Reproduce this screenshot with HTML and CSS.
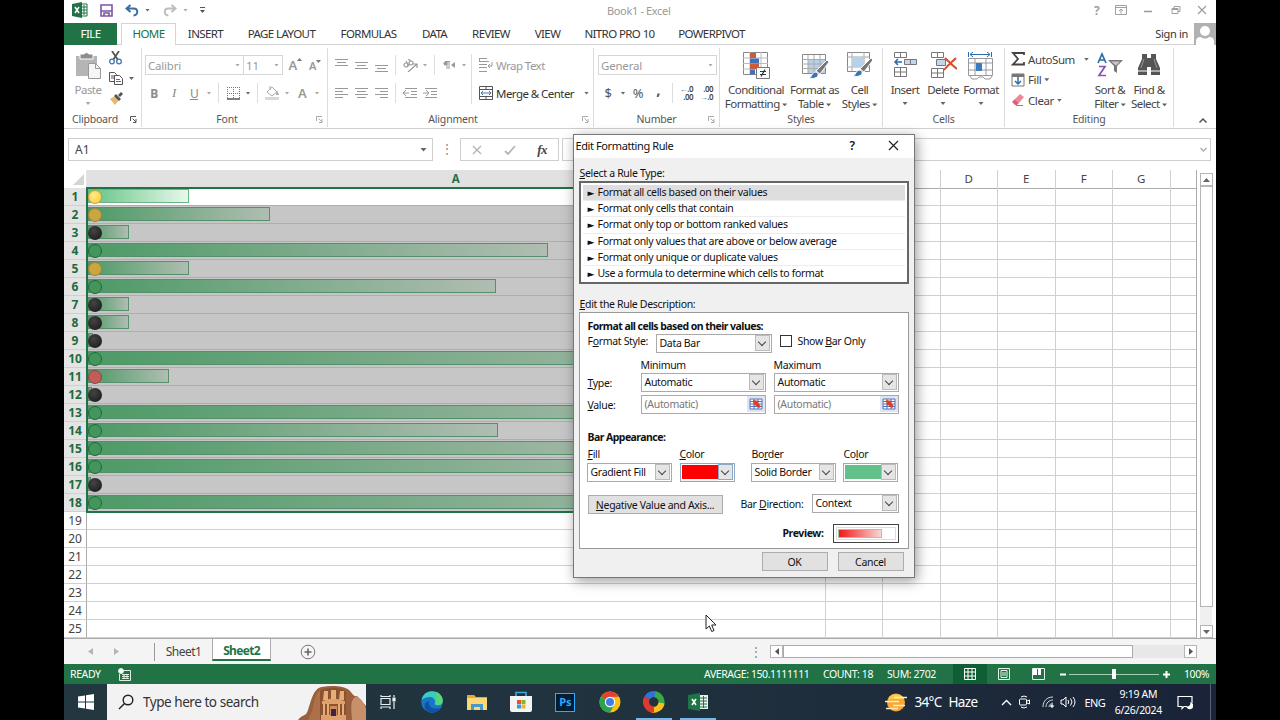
FILE: index.html
```html
<!DOCTYPE html>
<html lang="en">
<head>
  <meta charset="UTF-8" />
  <meta name="viewport" content="width=device-width, initial-scale=1.0" />
  <title>Book1 - Excel</title>
  <link rel="stylesheet" href="styles.css">
</head>
<body>
  <div class="screen">

    <!-- Title bar -->
    <div class="titlebar">
      <div class="quick">
        <svg width="16" height="16" viewBox="0 0 16 16"><path d="M8 2h7v12H8z" fill="#fff" stroke="#217346"/><path d="M9 5h6M9 8h6M9 11h6M12 3v10" stroke="#217346"/><path d="M0 2l10-2v16L0 14z" fill="#217346"/><path d="M3 5l4 6M7 5l-4 6" stroke="#fff" stroke-width="1.5"/></svg>
        <svg width="13" height="13" viewBox="0 0 13 13"><path d="M1 1h11v11H1z" fill="#fff" stroke="#7b56a8" stroke-width="1.6"/><path d="M1 7h11M4 12V9h5v3" fill="none" stroke="#7b56a8" stroke-width="1.6"/></svg>
        <svg width="14" height="13" viewBox="0 0 14 13"><path d="M5.500 1L1.500 4.500l4 3.500M2 4.500h6.500c5 0 5 6.500 0 7" fill="none" stroke="#3c6ea5" stroke-width="2"/></svg>
        <i class="caret"></i>
        <svg class="redo" width="14" height="13" viewBox="0 0 14 13"><path d="M8.500 1l4 3.500-4 3.500M12 4.500H5.500c-5 0-5 6.500 0 7" fill="none" stroke="#bdbdbd" stroke-width="2"/></svg>
        <i class="caret pale"></i>
        <svg class="more" width="5" height="6" viewBox="0 0 5 6"><path d="M0 .5h5" stroke="#555"/><path d="M0 3h5L2.500 6z" fill="#555"/></svg>
      </div>
      <div class="book">Book1 - Excel</div>
      <div class="winbtns">
        <b>?</b>
        <svg width="12" height="10" viewBox="0 0 12 10" fill="none" stroke="#a0a0a0"><path d="M.5.5h11v9H.5zM.5 2.500h11M6 8.500V4.500M4 6l2-2 2 2"/></svg>
        <svg width="12" height="10" viewBox="0 0 12 10"><path d="M2 6.500h8" stroke="#999" stroke-width="1.500"/></svg>
        <svg width="12" height="10" viewBox="0 0 12 10" fill="none" stroke="#a0a0a0"><path d="M2 3.500h6v5H2zM4 3.500v-2h6v5H8M2 4.500h6"/></svg>
        <svg width="10" height="10" viewBox="0 0 10 10"><path d="M1 1l8 8M9 1L1 9" stroke="#a0a0a0" stroke-width="1.300"/></svg>
      </div>
    </div>

    <!-- Ribbon tabs -->
    <div class="tabs">
      <div class="tab file">FILE</div>
      <div class="tab home">HOME</div>
      <div class="tab">INSERT</div>
      <div class="tab">PAGE LAYOUT</div>
      <div class="tab">FORMULAS</div>
      <div class="tab">DATA</div>
      <div class="tab">REVIEW</div>
      <div class="tab">VIEW</div>
      <div class="tab">NITRO PRO 10</div>
      <div class="tab">POWERPIVOT</div>
      <div class="signin">Sign in</div>
      <svg width="22" height="22" viewBox="0 0 22 22"><path d="M0 0h22v22H0z" fill="#b1b1b1"/><circle cx="11" cy="8" r="5" fill="#fff"/><path d="M2 22v-3c0-4 2-5 5-5 2 2 6 2 8 0 3 0 5 1 5 5v3z" fill="#fff"/></svg>
    </div>

    <!-- Ribbon -->
    <div class="ribbon">
      <div class="group clipboard">
        <div class="content">
          <div class="big off paste">
            <svg width="26" height="28" viewBox="0 0 26 28"><path d="M1 4h21v20H1z" fill="#b5b5b5"/><path d="M5 2h4a3 3 0 0 1 5 0h4v5H5z" fill="#8d8d8d" stroke="#fff"/><path d="M13.500 11.500h7l5 5v10h-12z" fill="#f6f6f6" stroke="#999"/><path d="M20.500 11.500v5h5" fill="none" stroke="#999"/></svg>
            <span>Paste</span><i class="caret pale"></i>
          </div>
          <div class="minis">
            <svg width="13" height="14" viewBox="0 0 13 14"><path d="M3 0l6 9M10 0L4 9" stroke="#555" stroke-width="1.800"/><circle cx="3" cy="10.500" r="2.300" fill="none" stroke="#3c78b4" stroke-width="1.300"/><circle cx="10" cy="10.500" r="2.300" fill="none" stroke="#3c78b4" stroke-width="1.300"/></svg>
            <div><svg width="14" height="13" viewBox="0 0 14 13" fill="#fff" stroke="#555"><path d="M.5.5h5l2 2v7h-7zM2 4h4M2 6h4"/><path d="M5.500 3.500h5l3 3v6h-8z"/><path d="M7 7.500h4M7 9.500h5" stroke="#3c78b4"/></svg><i class="caret"></i></div>
            <svg width="14" height="13" viewBox="0 0 14 13"><path d="M1 7l5-3 4 4-4 5z" fill="#e5b96c"/><path d="M5 4l2-2 5 5-2 2zM9 3l3-3 2 2-3 3z" fill="#555"/></svg>
          </div>
        </div>
        <div class="label"><span>Clipboard</span><svg class="launch dark" width="7" height="7" viewBox="0 0 7 7"><path d="M.5 5V.5H6M2.500 2.500L6 6M6 3v3.500H3"/></svg></div>
      </div>

      <div class="group font">
        <div class="content col">
          <div class="line">
            <div class="combo w99"><span>Calibri</span><i class="caret pale"></i></div>
            <div class="combo w39"><span>11</span><i class="caret pale"></i></div>
            <div class="w20 glyph grow">A<svg width="5" height="3"><path d="M0 3h5L2.500 0z" fill="#777"/></svg></div>
            <div class="w20 glyph small">A<svg width="5" height="3"><path d="M0 0h5L2.500 3z" fill="#777"/></svg></div>
          </div>
          <div class="line second">
            <div class="w20 fmt"><b>B</b></div>
            <div class="w20 fmt ital">I</div>
            <div class="w20 fmt under">U</div>
            <div class="w10"><i class="caret pale"></i></div>
            <div class="vsep"></div>
            <div class="w20"><svg width="13" height="13" viewBox="0 0 13 13" fill="none"><path d="M.5 0v12M6.500 0v12M12.500 0v12M0 .5h13M0 6.500h13" stroke="#777" stroke-dasharray="1 1"/><path d="M0 12h13" stroke="#555" stroke-width="1.500"/></svg></div>
            <div class="w10"><i class="caret"></i></div>
            <div class="vsep"></div>
            <div class="w20"><svg width="15" height="14" viewBox="0 0 15 14"><path d="M2 6l5-5 5 5-5 4zM5 4V0" fill="#fff" stroke="#aaa"/><path d="M12 4l2 5h-3z" fill="#aaa"/><path d="M0 11h14v3H0z" fill="#d9d9d9"/></svg></div>
            <div class="w10"><i class="caret pale"></i></div>
            <div class="w20 glyph">A</div>
            <div class="w10"><i class="caret pale"></i></div>
          </div>
        </div>
        <div class="label"><span>Font</span><svg class="launch" width="7" height="7" viewBox="0 0 7 7"><path d="M.5 5V.5H6M2.500 2.500L6 6M6 3v3.500H3"/></svg></div>
      </div>

      <div class="group align">
        <div class="content">
          <div class="col acol">
            <div class="line">
              <div class="w20"><svg class="bars" width="13" height="14"><path d="M0 1.500h13M2 4.500h9M0 7.500h13"/></svg></div>
              <div class="w20"><svg class="bars" width="13" height="14"><path d="M0 4.500h13M2 7.500h9M0 10.500h13"/></svg></div>
              <div class="w20"><svg class="bars" width="13" height="14"><path d="M0 7.500h13M2 10.500h9M0 13.500h13"/></svg></div>
              <div class="vsep"></div>
              <div class="w20"><svg width="15" height="13" viewBox="0 0 15 13" fill="none" stroke="#999" stroke-width="1.200"><circle cx="3" cy="6" r="2"/><path d="M3 2l3 5"/><circle cx="8" cy="4" r="2"/><path d="M5 0l3 2M5 13l9-8M10 5h4v4"/></svg></div>
              <div class="w10"><i class="caret pale"></i></div>
              <div class="vsep"></div>
              <div class="w20"><svg width="12" height="9" viewBox="0 0 12 9"><path d="M4 0v8M6 0v8M2 .5h5" stroke="#999"/><circle cx="2.500" cy="2.500" r="2" fill="#999"/><path d="M12 1v6L8 4z" fill="#999"/></svg></div>
              <div class="w10"><i class="caret pale"></i></div>
            </div>
            <div class="line second">
              <div class="w20"><svg class="bars" width="13" height="12"><path d="M0 1.500h13M0 4.500h8M0 7.500h13M0 10.500h8"/></svg></div>
              <div class="w20"><svg class="bars" width="13" height="12"><path d="M0 1.500h13M2 4.500h9M0 7.500h13M2 10.500h9"/></svg></div>
              <div class="w20"><svg class="bars" width="13" height="12"><path d="M0 1.500h13M5 4.500h8M0 7.500h13M5 10.500h8"/></svg></div>
              <div class="vsep"></div>
              <div class="w20"><svg class="bars" width="14" height="12"><path d="M2 1.500h12M8 4.500h6M8 7.500h6M2 10.500h12M0 6h6M3 3L0 6l3 3"/></svg></div>
              <div class="w20"><svg class="bars" width="14" height="12"><path d="M2 1.500h12M8 4.500h6M8 7.500h6M2 10.500h12M0 6h6M3 3l3 3-3 3"/></svg></div>
            </div>
          </div>
          <div class="vsep tall"></div>
          <div class="col wrapcol">
            <div class="line wrap"><svg width="14" height="14" viewBox="0 0 14 14" fill="none" stroke="#999"><path d="M0 .5h8M0 3.500h10M0 6.500h8M0 9.500h8M0 13.500h8M.5 0v4M13 4v4H9M11 6L9 8l2 2"/></svg>Wrap Text</div>
            <div class="line second merge"><svg width="14" height="14" viewBox="0 0 14 14" fill="none" stroke="#555"><path d="M.5.5h13v13H.5zM.5 3.500h13M.5 10.500h13M7 0v3M7 11v3"/><path d="M2 7h10M4 5L2 7l2 2M10 5l2 2-2 2" stroke="#3c78b4"/></svg>Merge &amp; Center<i class="caret"></i></div>
          </div>
        </div>
        <div class="label"><span>Alignment</span><svg class="launch" width="7" height="7" viewBox="0 0 7 7"><path d="M.5 5V.5H6M2.500 2.500L6 6M6 3v3.500H3"/></svg></div>
      </div>

      <div class="group number">
        <div class="content col">
          <div class="line"><div class="combo w118"><span>General</span><i class="caret pale"></i></div></div>
          <div class="line second">
            <div class="w20 sym">$</div>
            <div class="w10"><i class="caret"></i></div>
            <div class="w20 sym">%</div>
            <div class="w20 sym comma"><b>,</b></div>
            <div class="vsep"></div>
            <div class="dec"><span><em>←</em>.0</span><span>.00</span></div>
            <div class="dec"><span>.00</span><span><em>→</em>.0</span></div>
          </div>
        </div>
        <div class="label"><span>Number</span><svg class="launch" width="7" height="7" viewBox="0 0 7 7"><path d="M.5 5V.5H6M2.500 2.500L6 6M6 3v3.500H3"/></svg></div>
      </div>

      <div class="group styles">
        <div class="content">
          <div class="big cond">
            <svg width="28" height="28" viewBox="0 0 28 28"><path d="M1.500.5h24v22h-24z" fill="#fff" stroke="#888"/><path d="M1 6h25M1 11.500h25M1 17h25M8 0v22M19 0v22" stroke="#bbb"/><path d="M8 1h6v5H8zM8 12h9v5H8z" fill="#cf5a38"/><path d="M8 6.500h9v5H8zM8 17.500h5v5H8z" fill="#3f73b5"/><path d="M14.500 15.500h13v11h-13z" fill="#fff" stroke="#777"/><path d="M18 19.500h6M18 22.500h6M23 17.500l-4 7" stroke="#333" stroke-width="1.200"/></svg>
            <span>Conditional</span><span>Formatting <i class="caret"></i></span>
          </div>
          <div class="big fat">
            <svg width="28" height="28" viewBox="0 0 28 28"><path d="M1.500 2.500h23v19h-23z" fill="#fff" stroke="#888"/><path d="M7 8h17v13H7z" fill="#b7d1e8"/><path d="M1 7.500h23M1 12h23M1 16.500h23M7 3v18M13 3v18M19 3v18" stroke="#aaa"/><path d="M26 8l2 2-9 12-4-3z" fill="#777" stroke="#fff"/><path d="M8 26c3-1 3-6 7-6 3 1 3 5-1 6-2 1-4 0-6 0z" fill="#3676b5" stroke="#fff"/></svg>
            <span>Format as</span><span>Table <i class="caret"></i></span>
          </div>
          <div class="big cst">
            <svg width="28" height="28" viewBox="0 0 28 28"><path d="M1.500.5h22v19h-22z" fill="#fff" stroke="#888"/><path d="M1 5h22M1 15h22M6 0v19M18 0v19" stroke="#aaa"/><path d="M6 5h12v10H6z" fill="#b7d1e8"/><path d="M25 6l2 2-9 12-4-3z" fill="#777" stroke="#fff"/><path d="M7 24c3-1 3-6 7-6 3 1 3 5-1 6-2 1-4 0-6 0z" fill="#3676b5" stroke="#fff"/></svg>
            <span>Cell</span><span>Styles <i class="caret"></i></span>
          </div>
        </div>
        <div class="label"><span>Styles</span></div>
      </div>

      <div class="group cells">
        <div class="content">
          <div class="big w38">
            <svg width="24" height="28" viewBox="0 0 24 28" fill="#fff" stroke="#777"><path d="M1.500.5h12v5h-12zM7.500.5v5M1.500 15.500h12v9h-12zM7.500 15.500v9M1.500 20h12"/><path d="M11.500 7.500h12v5h-12zM17.500 7.500v5" fill="#c4d7ea"/><path d="M2 10h7M5 7l-3 3 3 3" fill="none" stroke="#2b6cae" stroke-width="1.500"/></svg>
            <span>Insert</span><i class="caret"></i>
          </div>
          <div class="big w38">
            <svg width="27" height="28" viewBox="0 0 27 28" fill="#fff" stroke="#777"><path d="M1.500.5h12v5h-12zM7.500.5v5M1.500 16.500h12v9h-12zM7.500 16.500v9M1.500 21h12"/><path d="M6.500 7.500h9v6h-9z" fill="#c4d7ea"/><path d="M15 6c3 3 7 7 12 11M26 6c-4 4-8 7-12 12" fill="none" stroke="#d2502c" stroke-width="2"/></svg>
            <span>Delete</span><i class="caret"></i>
          </div>
          <div class="big w38">
            <svg width="26" height="28" viewBox="0 0 26 28" fill="#fff" stroke="#999"><path d="M.5 6.500h24v17h-24z"/><path d="M.5 11h24M.5 18h24M7 6v18M18 6v18M2 24l2 3h5l2-2h4l2 2h5l2-3"/><path d="M8 11h6v8H8z" fill="#3b7cc0" stroke="none"/><path d="M2 2.500h20M5 0L2 2.500 5 5M19 0l3 2.500L19 5M.5 0v5M23.500 0v5" fill="none" stroke="#2b6cae"/></svg>
            <span>Format</span><i class="caret"></i>
          </div>
        </div>
        <div class="label"><span>Cells</span></div>
      </div>

      <div class="group editing">
        <div class="content">
          <div class="edits">
            <div class="edit"><svg width="14" height="14" viewBox="0 0 14 14"><path d="M13 3V1H2l5 6-5 5.500h11V10" fill="none" stroke="#444" stroke-width="1.800"/></svg>AutoSum<i class="caret far"></i></div>
            <div class="edit"><svg width="14" height="14" viewBox="0 0 14 14"><path d="M1 1h12v12H1z" fill="#fff" stroke="#777"/><path d="M1 1h12v3H1z" fill="#777"/><path d="M7 4v7M4 8l3 3 3-3" fill="none" stroke="#2b6cae" stroke-width="1.500"/></svg>Fill<i class="caret"></i></div>
            <div class="edit"><svg width="14" height="14" viewBox="0 0 14 14"><path d="M4 6l5-5 4 3-5 6z" fill="#e68a9c"/><path d="M1 9l3-3 4 4-2 2H4z" fill="#e0607c"/><path d="M5 12.500h7" stroke="#888"/></svg>Clear<i class="caret"></i></div>
          </div>
          <div class="big w38">
            <svg width="28" height="28" viewBox="0 0 28 28"><path d="M2 11l4-9 4 9M3.500 8h5" fill="none" stroke="#2b6cae" stroke-width="1.700"/><path d="M3 14.500h6L3 23.500h7" fill="none" stroke="#8454b0" stroke-width="1.700"/><path d="M12 8h15l-6 6v7l-3-2v-5z" fill="#777"/><path d="M15 9.500h9l-4 4z" fill="#c9c9c9"/></svg>
            <span>Sort &amp;</span><span>Filter <i class="caret"></i></span>
          </div>
          <div class="big w40">
            <svg width="24" height="28" viewBox="0 0 24 28" fill="#555"><path d="M5 2h5v4h4V2h5v5l4 9v7h-9v-8h-4v8H1v-7l4-9z"/><path d="M1 19h9M14 19h9" stroke="#fff"/><path d="M7 7l-3 9M17 7l3 9" stroke="#999"/></svg>
            <span>Find &amp;</span><span>Select <i class="caret"></i></span>
          </div>
        </div>
        <div class="label"><span>Editing</span></div>
      </div>
      <svg class="collapse" width="8" height="5" viewBox="0 0 8 5"><path d="M.5 4.500L4 1l3.500 3.500" fill="none" stroke="#555" stroke-width="1.500"/></svg>
    </div>

    <!-- Formula bar -->
    <div class="formulabar">
      <div class="namebox">A1<i class="caret wide"></i></div>
      <div class="dots">⋮</div>
      <div class="fxbox">
        <svg width="10" height="10" viewBox="0 0 10 10"><path d="M1 1l8 8M9 1L1 9" stroke="#b5b5b5" stroke-width="1.400"/></svg>
        <svg width="12" height="10" viewBox="0 0 12 10"><path d="M1 6l3 3 7-8" fill="none" stroke="#b5b5b5" stroke-width="1.800"/></svg>
        <em>fx</em>
      </div>
      <div class="formula"><svg width="7" height="5" viewBox="0 0 7 5"><path d="M.5 1l3 3 3-3" fill="none" stroke="#aaa" stroke-width="1.300"/></svg></div>
    </div>

    <!-- Worksheet -->
    <div class="sheetarea">
      <div class="sheet" id="sheet">
        <div class="row colhead">
          <div class="corner"><svg width="11" height="11"><path d="M11 0v11H0z" fill="#d5d5d5"/></svg></div>
          <div class="active">A</div><div>B</div><div>C</div><div>D</div><div>E</div><div>F</div><div>G</div><div></div>
        </div>
        <div class="selection"></div>
      </div>
      <div class="vscroll">
        <div class="sbtn"><svg width="7" height="4"><path d="M0 4h7L3.500 0z" fill="#666"/></svg></div>
        <div class="vthumb"></div>
        <div class="sbtn"><svg width="7" height="4"><path d="M0 0h7L3.500 4z" fill="#666"/></svg></div>
      </div>
    </div>

    <!-- Sheet tabs -->
    <div class="sheettabs">
      <div class="nav"><svg width="5" height="7"><path d="M5 0v7L0 3.500z" fill="#b5b5b5"/></svg><svg width="5" height="7"><path d="M0 0v7l5-3.500z" fill="#b5b5b5"/></svg></div>
      <div class="stab">Sheet1</div>
      <div class="stab on">Sheet2</div>
      <svg class="plus" width="16" height="16" viewBox="0 0 16 16"><circle cx="8" cy="8" r="6.800" fill="none" stroke="#777"/><path d="M4.500 8h7M8 4.500v7" stroke="#666" stroke-width="1.600"/></svg>
      <div class="dots hd">⋮</div>
      <div class="hscroll">
        <div class="sbtn"><svg width="4" height="7"><path d="M4 0v7L0 3.500z" fill="#555"/></svg></div>
        <div class="hthumb"></div>
        <div class="sbtn"><svg width="4" height="7"><path d="M0 0v7l4-3.500z" fill="#555"/></svg></div>
      </div>
    </div>

    <!-- Status bar -->
    <div class="status">
      <span class="ready">READY</span>
      <svg width="13" height="13" viewBox="0 0 13 13" fill="none" stroke="#dcefe3"><path d="M5 2.500h7.500v10H1.500V6M4 6.500h7M4 8.500h7M4 10.500h7M6 6v5M9 6v5"/><circle cx="3" cy="3" r="2.500" fill="#fff"/></svg>
      <div class="stats"><span class="avg">AVERAGE: 150.1111111</span><span class="cnt">COUNT: 18</span><span class="sum">SUM: 2702</span></div>
      <div class="view on"><svg width="12" height="12" fill="none" stroke="#fff"><path d="M.5.5h11v11H.5zM.5 4h11M.5 8h11M4 0v12M8 0v12"/></svg></div>
      <div class="view"><svg width="12" height="12" fill="none" stroke="#e4f2e9"><path d="M.5.5h11v11H.5zM3 2.500h6v7H3zM4 5h4M4 7h4"/></svg></div>
      <div class="view"><svg width="13" height="12"><path d="M.5.5h12v11H.5z" fill="none" stroke="#e4f2e9"/><path d="M1 1h4v6H1zM6 1h3v6H6z" fill="#fff"/></svg></div>
      <svg class="zoom" width="110" height="12" viewBox="0 0 110 12"><path d="M0 6.500h6M103 6.500h7M106.500 3v7" stroke="#fff" stroke-width="2"/><path d="M9 6.500h90" stroke="#a7cdb5"/><path d="M52 1h4v10h-4z" fill="#fff"/></svg>
      <span class="pct">100%</span>
    </div>

    <!-- Taskbar -->
    <div class="taskbar">
      <div class="start"><svg width="16" height="16" viewBox="0 0 16 16" fill="#fff"><path d="M0 2.500L7 1.500v6H0zM8 1.300L16 0v7.500H8zM0 8.500h7v6l-7-1zM8 8.500h8V16l-8-1.300z"/></svg></div>
      <div class="search">
        <svg width="16" height="16" viewBox="0 0 16 16" fill="none" stroke="#222" stroke-width="1.400"><circle cx="10" cy="6" r="4.800"/><path d="M6.500 9.500L1 15"/></svg>
        <span>Type here to search</span>
        <svg class="petra" width="68" height="34" viewBox="0 0 68 34"><path d="M0 34c4-6 8-3 10-10C13 16 15 2 24 1c10-2 22-1 27 3 4 4 5 7 8 6l9 10v14z" fill="#9a5f3d"/><path d="M12 30c4-6 3-20 10-26v30H10z" fill="#ad7049"/><path d="M22 34V5c6-5 22-4 26 1v28z" fill="#8a5230"/><path d="M54 34c0-8-3-18 3-23 6-1 10 8 11 12v11z" fill="#c88f6b"/><path d="M24 15l11-3 12 3v3H24zM23 29h25v5H23z" fill="#e0a06b"/><path d="M26 5h4v9h-5zM33 4h5v9h-5zM42 5h4v9h-5z" fill="#e6ad79"/><path d="M26 18v11M30 18v11M41 18v11M45 18v11" stroke="#e6ad79" stroke-width="2"/><path d="M32 20h7v10h-7z" fill="#d08c5a"/><path d="M33 23h5v7h-5z" fill="#42204d"/></svg>
      </div>
      <div class="app"><svg width="16" height="14" viewBox="0 0 16 14" fill="none" stroke="#e8eef0" stroke-width="1.200"><path d="M1 3.500h9v6H1zM1 0v1.500h9V0M1 14v-2h9v2M14 0v2M14 7v7"/><path d="M13 3h2v3h-2z" fill="#fff"/></svg></div>
      <div class="app"><svg width="22" height="22" viewBox="0 0 22 22"><circle cx="11" cy="11" r="10.700" fill="#1677c8"/><path d="M.5 9C2 3 6 .3 11 .3c6 0 11 4 10.700 9.700-.2 4-4 5-7 4-1.700-.6-1-2-.5-3C14 8 12 6 9 6 5 6 2 7.500.5 9z" fill="#3ccbc0"/><path d="M15 1c5 2 7 6 6.600 9.500-.5 3-3 4-6 3.500z" fill="#5bd675"/><path d="M8 10c-1 6 4 9 11 7-3 5-9 5.500-13 3-4-4-3-9 2-10z" fill="#1251a0"/></svg></div>
      <div class="app"><svg width="20" height="17" viewBox="0 0 20 17"><path d="M0 1h7l2 2h11v13H0z" fill="#e9a931"/><path d="M0 4h20v12H0z" fill="#fbd775"/><path d="M4 16v-6h12v6h-3v-3H7v3z" fill="#4a98c9"/></svg></div>
      <div class="app"><svg width="22" height="22" viewBox="0 0 22 22"><path d="M6 5V1.500h10V5" fill="none" stroke="#3da9e6" stroke-width="1.600"/><path d="M0 5h22v14q0 2-2 2H2q-2 0-2-2z" fill="#f4f4f4"/><path d="M7 9h4v4H7z" fill="#e8512c"/><path d="M11.500 9h4v4h-4z" fill="#7fb928"/><path d="M7 13.500h4v4H7z" fill="#2e9fe0"/><path d="M11.500 13.500h4v4h-4z" fill="#f6b51e"/></svg></div>
      <div class="app"><div class="ps">Ps</div></div>
      <div class="app"><svg width="22" height="22" viewBox="0 0 22 22"><circle cx="11" cy="11" r="10.500" fill="#fbc116"/><path d="M11 11L1.900 5.700A10.500 10.500 0 0 1 20 5.800L11 6z" fill="#e24234"/><path d="M1.900 5.700A10.500 10.500 0 0 0 11 21.500l4.500-8L11 11z" fill="#2fa24f"/><circle cx="11" cy="11" r="5.200" fill="#fff"/><circle cx="11" cy="11" r="4" fill="#3f7ee8"/></svg></div>
      <div class="app open"><svg width="22" height="22" viewBox="0 0 22 22" fill="none" stroke-width="6"><path d="M4 7a8 8 0 0 1 9-3.700" stroke="#3171d8"/><path d="M12 3.200A8 8 0 0 1 18 14" stroke="#3aa845"/><path d="M18.500 12A8 8 0 0 1 9 18.700" stroke="#f4c21a"/><path d="M11 18.800A8 8 0 0 1 4 7" stroke="#e03a2f"/></svg></div>
      <div class="app open"><svg width="20" height="18" viewBox="0 0 20 18"><path d="M11 2h9v14h-9z" fill="#e9f2ec"/><path d="M12 5h7M12 8h7M12 11h7M12 14h7M15.500 3v12" stroke="#217346"/><path d="M0 2l12-2v18L0 16z" fill="#1e7446"/><path d="M4 6l4 6M8 6l-4 6" stroke="#fff" stroke-width="1.600"/></svg></div>
      <div class="tray">
        <svg width="22" height="19" viewBox="0 0 22 19"><circle cx="11" cy="9.500" r="9" fill="#f6a833"/><path d="M3 6a9 9 0 0 1 16 0z" fill="#fbc84a"/><path d="M9 4.500h13M0 8.500h14M8 12.500h12M1 15.500h12" stroke="#ffe9c0" stroke-width="1.400"/></svg>
        <span class="temp">34°C</span><span class="haze">Haze</span>
        <svg class="chev" width="11" height="7" viewBox="0 0 11 7"><path d="M1 6l4.500-4.500L10 6" fill="none" stroke="#fff" stroke-width="1.300"/></svg>
        <svg class="cam" width="11" height="14" viewBox="0 0 11 14" fill="none" stroke="#fff"><rect x=".5" y="4" width="7" height="6" rx="1"/><path d="M8 6l2.500-1v4L8 8M2 2q3-2 6 0M2 12q3 2 6 0"/></svg>
        <svg class="wifi" width="12" height="12" viewBox="0 0 12 12" fill="none" stroke="#d5dae2"><path d="M1 11C1 5 5 1 11 1M4 11c0-4 3-7 7-7M7 11c0-2 2-4 4-4"/><circle cx="10" cy="10" r="1.300" fill="#fff"/></svg>
        <svg class="snd" width="16" height="12" viewBox="0 0 16 12" fill="none" stroke="#fff"><path d="M1 4h2l3-3v10L3 8H1zM8 4q1.500 2 0 4M10.500 2.500q3 3.500 0 7M13 1q4 5 0 10"/></svg>
        <span class="eng">ENG</span>
        <div class="clock"><span>9:19 AM</span><span>6/26/2024</span></div>
        <svg class="note" width="16" height="15" viewBox="0 0 16 15" fill="none" stroke="#fff" stroke-width="1.200"><path d="M10 11.500H7l-2 2v-2H1v-10h14V8"/><path d="M14 8a3 3 0 1 1-4 4q4 0 4-4z" fill="#fff"/></svg>
        <div class="desk"></div>
      </div>
    </div>

    <!-- Edit Formatting Rule dialog -->
    <div class="dialog">
      <div class="dtitle"><span>Edit Formatting Rule</span><b>?</b><svg width="11" height="11" viewBox="0 0 11 11"><path d="M1 1l9 9M10 1l-9 9" stroke="#222" stroke-width="1.200"/></svg></div>
      <div class="dlabel first"><u>S</u>elect a Rule Type:</div>
      <div class="rules">
        <div class="rule picked">Format all cells based on their values</div>
        <div class="rule">Format only cells that contain</div>
        <div class="rule">Format only top or bottom ranked values</div>
        <div class="rule">Format only values that are above or below average</div>
        <div class="rule">Format only unique or duplicate values</div>
        <div class="rule">Use a formula to determine which cells to format</div>
      </div>
      <div class="dlabel second"><u>E</u>dit the Rule Description:</div>
      <div class="panel">
        <div class="bold head">Format all cells based on their values:</div>
        <div class="frow style">
          <label>F<u>o</u>rmat Style:</label>
          <div class="select s116">Data Bar<i></i></div>
          <div class="check"></div>
          <span>Show <u>B</u>ar Only</span>
        </div>
        <div class="minmax">
          <span></span><span>Minimum</span><span>Maximum</span>
          <label><u>T</u>ype:</label><div class="select">Automatic<i></i></div><div class="select">Automatic<i></i></div>
          <label><u>V</u>alue:</label>
          <div class="select ref">(Automatic)<svg width="18" height="16" viewBox="0 0 18 16"><path d="M0 0h18v16H0z" fill="#dfe5f0"/><path d="M3 3h12v10H3z" fill="#fff" stroke="#5272b8"/><path d="M3 5.500h12M3 8h12M3 10.500h12M7 3v10M11 3v10" stroke="#5272b8"/><path d="M6 4l6 1-1 1.500 3 4-2 1.500-4-3-1 1z" fill="#d8402c"/></svg></div>
          <div class="select ref">(Automatic)<svg width="18" height="16" viewBox="0 0 18 16"><path d="M0 0h18v16H0z" fill="#dfe5f0"/><path d="M3 3h12v10H3z" fill="#fff" stroke="#5272b8"/><path d="M3 5.500h12M3 8h12M3 10.500h12M7 3v10M11 3v10" stroke="#5272b8"/><path d="M6 4l6 1-1 1.500 3 4-2 1.500-4-3-1 1z" fill="#d8402c"/></svg></div>
        </div>
        <div class="bold appear">Bar Appearance:</div>
        <div class="bars4">
          <span><u>F</u>ill</span><span><u>C</u>olor</span><span>Bo<u>r</u>der</span><span>Co<u>l</u>or</span>
          <div class="select s85">Gradient Fill<i></i></div>
          <div class="select s55 hot"><div class="swatch red"></div><i></i></div>
          <div class="select s85">Solid Border<i></i></div>
          <div class="select s55"><div class="swatch green"></div><i></i></div>
        </div>
        <div class="frow direction">
          <div class="btn neg"><span><u>N</u>egative Value and Axis...</span></div>
          <label>Bar <u>D</u>irection:</label>
          <div class="select s87">Context<i></i></div>
        </div>
        <div class="frow preview"><b>Preview:</b><div class="pbox"><div><div class="pfill"></div></div></div></div>
      </div>
      <div class="actions"><div class="btn">OK</div><div class="btn">Cancel</div></div>
    </div>

    <svg class="pointer" width="12" height="19" viewBox="0 0 12 19"><path d="M1 1v14l3.300-3 2.400 5.500 2.300-1L6.700 11H11z" fill="#fff" stroke="#222"/></svg>
  </div>

  <script>
    // [icon, bar width in px] for rows 1-18
    const cells = [
      ['yellow', 101], ['yellow', 182], ['black', 41], ['green', 460], ['yellow', 101], ['green', 408],
      ['black', 41], ['black', 41], ['black', 5], ['green', 690], ['red', 81], ['black', 4],
      ['green', 640], ['green', 410], ['green', 600], ['green', 640], ['black', 3], ['green', 690]
    ];

    let html = '';
    for (let n = 1; n <= 25; n++) {
      const cell = cells[n - 1];
      let inner = '';
      if (cell) {
        inner = `<div class="bar" style="width:${cell[1]}px"></div><div class="dot ${cell[0]}"></div>`;
      }
      html += `<div class="row ${cell ? 'sel' : ''} ${n === 1 ? 'current' : ''}"><div class="num">${n}</div><div class="cellA">${inner}</div>` + '<div></div>'.repeat(7) + '</div>';
    }
    document.getElementById('sheet').insertAdjacentHTML('beforeend', html);
  </script>
</body>
</html>
```
FILE: styles.css
```css
* {
  box-sizing: border-box;
}

body {
  margin: 0;
  background: #000;
  font-family: "Noto Sans", "Open Sans", sans-serif;
  font-size: 12px;
  color: #444;
  overflow: hidden;
}

svg {
  display: block;
  flex: none;
}

.screen {
  position: relative;
  display: flex;
  flex-direction: column;
  width: 1152px;
  height: 720px;
  margin: 0 64px;
  background: #fff;
  overflow: hidden;
  white-space: nowrap;
}

.caret {
  display: inline-block;
  flex: none;
  width: 5px;
  height: 3px;
  background: #666;
  clip-path: polygon(0 0, 100% 0, 50% 100%);
  vertical-align: middle;
}

.caret.wide {
  width: 7px;
  height: 4px;
}

.caret.pale {
  background: #aaa;
}

/* title bar */
.titlebar {
  display: flex;
  align-items: center;
  height: 23px;
  padding: 0 9px 3px 8px;
}

.quick {
  display: flex;
  align-items: center;
  width: 535px;
}

.quick svg + svg {
  margin-left: 12px;
}

.quick .caret {
  margin-left: 6px;
}

.quick .redo {
  margin-left: 13px;
}

.quick .more {
  margin-left: 12px;
}

.book {
  flex: 1;
  padding-top: 1px;
  color: #999;
  font-size: 11px;
  letter-spacing: -0.35px;
}

.winbtns {
  display: flex;
  align-items: center;
  justify-content: space-between;
  width: 113px;
  color: #a0a0a0;
  font-size: 12px;
}

/* tabs */
.tabs {
  display: grid;
  grid-template-columns: 53px 4px 55px 59px 93px 81px 51px 62px 51px 93px 91px 1fr 22px;
  height: 22px;
  border-bottom: 1px solid #d4d4d4;
  color: #333;
  font-size: 11.5px;
  line-height: 22px;
}

.tab {
  text-align: center;
  letter-spacing: -0.6px;
}

.tab.file {
  background: #217346;
  color: #fff;
}

.tab.home {
  grid-column: 3;
  height: 22px;
  border: 1px solid #d4d4d4;
  border-bottom: 0;
  background: #fff;
  color: #217346;
  line-height: 20px;
}

.signin {
  padding-right: 6px;
  text-align: right;
  font-size: 11px;
  line-height: 21px;
  letter-spacing: -0.3px;
}

/* ribbon */
.ribbon {
  display: flex;
  height: 84px;
  border-bottom: 1px solid #d0d0d0;
  font-size: 11.5px;
  letter-spacing: -0.55px;
}

.group {
  position: relative;
  display: flex;
  flex-direction: column;
  height: 79px;
  margin-top: 3px;
  border-right: 1px solid #dcdcdc;
}

.clipboard { width: 78px; }
.font { width: 186px; }
.align { width: 266px; }
.number { width: 126px; }
.styles { width: 163px; }
.cells { width: 122px; }
.editing { width: 169px; }

.content {
  display: flex;
  height: 65px;
}

.col {
  display: flex;
  flex-direction: column;
}

.label {
  display: flex;
  align-items: center;
  height: 16px;
  font-size: 10.5px;
  line-height: 16px;
  letter-spacing: -0.2px;
  color: #555;
}

.label span {
  flex: 1;
  text-align: center;
}

.font .label span,
.align .label span,
.number .label span {
  padding-right: 15px;
}

.number .label span {
  padding-right: 0;
}

.clipboard .label span {
  text-align: left;
  padding-left: 8px;
}

.launch {
  margin: 0 4px 0 -11px;
  fill: none;
  stroke: #aaa;
}

.launch.dark {
  stroke: #555;
}

.big {
  display: flex;
  flex-direction: column;
  align-items: center;
  padding-top: 4px;
  line-height: 14px;
  color: #444;
}

.big svg {
  margin-bottom: 3px;
}

.big > .caret {
  margin-top: 5px;
}

.big.off {
  color: #999;
}

.paste {
  width: 45px;
  padding-left: 3px;
}

.cond { width: 72px; }
.fat { width: 45px; }
.cst { width: 45px; }
.w38 { width: 38px; }
.w40 { width: 40px; }

.cells .content {
  padding-left: 3px;
}

.minis {
  display: flex;
  flex-direction: column;
  gap: 7px;
  padding-top: 3px;
}

.minis div {
  display: flex;
  align-items: center;
}

.minis .caret {
  margin-left: 6px;
}

.line {
  display: flex;
  align-items: center;
  height: 20px;
  margin-top: 7px;
}

.line.second {
  margin-top: 8px;
}

.font .content {
  padding-left: 3px;
}

.font .second {
  margin-left: -1px;
}

.combo {
  display: flex;
  align-items: center;
  justify-content: space-between;
  height: 20px;
  padding: 0 3px 0 2px;
  border: 1px solid #d6d6d6;
  color: #999;
  letter-spacing: -0.2px;
}

.combo + .combo {
  border-left: 0;
}

.w99 { width: 99px; }
.w39 { width: 39px; }
.w118 { width: 119px; }

.w20, .w10 {
  display: flex;
  align-items: center;
  justify-content: center;
  width: 20px;
}

.w10 {
  width: 10px;
}

.glyph {
  font-size: 13px;
  font-weight: 600;
  color: #999;
}

.glyph.grow {
  margin-left: 2px;
}

.glyph svg {
  align-self: flex-start;
  margin-top: 2px;
}

.glyph.small {
  font-size: 11px;
}

.fmt {
  font-size: 12px;
  color: #8a8a8a;
}

.ital {
  font-family: "Liberation Serif", serif;
  font-style: italic;
  font-size: 13px;
}

.under {
  text-decoration: underline;
}

.vsep {
  width: 1px;
  height: 20px;
  margin: 0 4px;
  background: #dedede;
}

.vsep.tall {
  height: 50px;
  margin: 6px 7px 0 0;
}

.align .content {
  padding-left: 3px;
}

.acol {
  width: 140px;
}

.bars {
  fill: none;
  stroke: #999;
}

.wrap, .merge {
  gap: 3px;
  color: #999;
}

.merge {
  color: #333;
}

.merge .caret {
  margin-left: 7px;
}

.number .content {
  padding-left: 4px;
}

.sym {
  font-size: 13px;
  color: #555;
}

.sym.comma {
  font-size: 15px;
  padding-bottom: 8px;
}

.dec {
  display: flex;
  flex-direction: column;
  align-items: flex-end;
  width: 16px;
  font-size: 8px;
  font-weight: 600;
  line-height: 8px;
  color: #444;
}

.dec + .dec {
  margin-left: 4px;
}

.dec em {
  font-style: normal;
  color: #2b6cae;
}

.edits {
  width: 86px;
  padding: 1px 0 0 6px;
}

.edit {
  display: flex;
  align-items: center;
  gap: 3px;
  height: 20.5px;
  letter-spacing: -0.4px;
}

.edit .far {
  margin-left: 6px;
}

.collapse {
  align-self: flex-end;
  margin: 0 0 5px 25px;
}

/* formula bar */
.formulabar {
  display: flex;
  height: 41px;
  padding: 9px 5px 0 4px;
}

.namebox, .fxbox, .formula {
  display: flex;
  align-items: center;
  height: 23px;
  border: 1px solid #cfcfcf;
}

.namebox {
  justify-content: space-between;
  width: 365px;
  padding: 0 5px 0 6px;
}

.dots {
  width: 27px;
  line-height: 22px;
  text-align: center;
  color: #888;
}

.fxbox {
  justify-content: space-between;
  width: 99px;
  padding: 0 11px 0 11px;
}

.fxbox em {
  font-family: "Liberation Serif", serif;
  font-size: 13px;
  font-weight: bold;
  letter-spacing: -0.5px;
}

.formula {
  flex: 1;
  justify-content: flex-end;
  margin-left: 3px;
  padding-right: 3px;
}

/* worksheet */
.sheetarea {
  display: flex;
  height: 469px;
  border-bottom: 1px solid #ababab;
}

.sheet {
  position: relative;
  width: 1133px;
  height: 468px;
  overflow: hidden;
  border-right: 1px solid #ababab;
}

.row {
  display: grid;
  grid-template-columns: 23px 738.5px 57.5px 57.5px 57.5px 57.5px 57.5px 57.5px 1fr;
  height: 18px;
}

.row > div {
  border-right: 1px solid #d0d0d0;
  border-bottom: 1px solid #d0d0d0;
}

.row > div:last-child {
  border-right: 0;
}

.colhead > div {
  border-bottom-color: #ababab;
  font-size: 11.5px;
  line-height: 18px;
  text-align: center;
}

.colhead .corner {
  padding: 4px 0 0 9px;
  border-right-color: #e4e4e4;
}

.colhead .active {
  background: #e1e1e1;
  color: #217346;
  font-weight: bold;
}

.row .num {
  border-right-color: #ababab;
  line-height: 17px;
  text-align: center;
  color: #444;
}

.sel .num {
  background: #e4e4e4;
  color: #1d6b40;
  font-weight: bold;
}

.row .cellA {
  position: relative;
}

.sel .cellA {
  background: #c6c6c6;
  border-bottom-color: #aab0ab;
}

.current .cellA {
  background: #fff;
}

.bar {
  height: 14px;
  margin: 1px 0 0 1px;
  border: 1px solid #54916b;
  background: linear-gradient(to right, #4d9a66, #b0bdb2);
}

.current .bar {
  border-color: #69b585;
  background: linear-gradient(to right, #63c384, #e8f8ec);
}

.dot {
  position: absolute;
  left: 1px;
  top: 1.5px;
  width: 14px;
  height: 14px;
  border-radius: 50%;
}

.dot.yellow {
  border: 1px solid #a8803a;
  background: #c9a640;
}

.current .dot.yellow {
  border-color: #d99b2c;
  background: radial-gradient(circle at 40% 35%, #ffec8a, #fbcb3a);
}

.dot.black {
  background: radial-gradient(circle at 40% 35%, #444, #151515);
}

.dot.green {
  border: 1px solid #1c6a3a;
  background: #44955b;
}

.dot.red {
  border: 1px solid #8a4a40;
  background: #c55a5a;
}

.selection {
  position: absolute;
  left: 22px;
  top: 17px;
  width: 740px;
  height: 326px;
  border: 2px solid #217346;
  z-index: 1;
}

.vscroll {
  display: flex;
  flex-direction: column;
  width: 12px;
  margin: 3px 0 0 3px;
  background: #f0f0f0;
}

.sbtn {
  display: flex;
  align-items: center;
  justify-content: center;
  flex: none;
  width: 13px;
  height: 13px;
  border: 1px solid #b5b5b5;
  background: #fff;
}

.vthumb {
  width: 13px;
  height: 422px;
  margin-bottom: 18px;
  border: 1px solid #b5b5b5;
  background: #fff;
}

/* sheet tabs */
.sheettabs {
  display: flex;
  align-items: center;
  height: 25px;
  background: #f4f4f4;
}

.nav {
  display: flex;
  align-items: center;
  gap: 21px;
  width: 91px;
  height: 18px;
  padding-left: 24px;
  border-right: 1px solid #999;
}

.stab {
  width: 57px;
  height: 24px;
  line-height: 23px;
  text-align: center;
  letter-spacing: -0.5px;
}

.stab.on {
  width: 59px;
  align-self: flex-start;
  height: 22px;
  border-right: 1px solid #ababab;
  border-left: 1px solid #ababab;
  border-bottom: 2px solid #217346;
  background: #fff;
  color: #217346;
  font-weight: bold;
  letter-spacing: -0.7px;
}

.plus {
  margin-left: 29px;
}

.dots.hd {
  margin-left: 426px;
}

.hscroll {
  display: flex;
  width: 427px;
  margin-left: 1px;
  background: #e8e8e8;
}

.hthumb {
  width: 350px;
  height: 13px;
  margin-right: auto;
  border: 1px solid #ababab;
  background: #fff;
}

/* status bar */
.status {
  display: flex;
  align-items: center;
  height: 20px;
  background: #217346;
  color: #fff;
  font-size: 10.5px;
  letter-spacing: -0.4px;
}

.ready {
  width: 54px;
  padding-left: 6px;
}

.stats {
  display: flex;
  width: 822px;
  padding-left: 573px;
}

.avg { width: 119px; }
.cnt { width: 64px; }

.view {
  display: flex;
  align-items: center;
  justify-content: center;
  width: 34px;
  height: 20px;
}

.view.on {
  background: #0f5f34;
}

.zoom {
  margin-left: 5px;
}

.pct {
  margin-left: 14px;
}

/* taskbar */
.taskbar {
  display: flex;
  height: 36px;
  background: linear-gradient(to right, #22373f, #20323e 50%, #1a2338);
  color: #fff;
}

.start {
  display: flex;
  align-items: center;
  justify-content: center;
  width: 43px;
}

.search {
  display: flex;
  align-items: center;
  width: 259px;
  padding-left: 11px;
  background: #f2f2f2;
  color: #333;
  font-size: 13.5px;
  letter-spacing: -0.45px;
}

.search span {
  flex: 1;
  padding-left: 9px;
}

.petra {
  align-self: flex-end;
}

.app {
  display: flex;
  align-items: center;
  justify-content: center;
  width: 44.3px;
}

.app.open {
  background: linear-gradient(#76b9ed, #76b9ed) center bottom / 36px 2px no-repeat;
}

.ps {
  width: 20px;
  height: 19px;
  border: 1.5px solid #31a8ff;
  background: #001e36;
  color: #31a8ff;
  font-size: 11px;
  font-weight: bold;
  line-height: 16px;
  text-align: center;
}

.tray {
  display: flex;
  align-items: center;
  flex: 1;
  padding-left: 165px;
  font-size: 13.5px;
  letter-spacing: -0.6px;
}

.temp {
  width: 34px;
  margin-left: 7px;
}

.haze { width: 53px; }
.cam { margin-left: 7px; }
.wifi { margin-left: 12px; }
.snd { margin-left: 6px; }

.eng {
  width: 24px;
  margin-left: 8px;
  font-size: 11px;
}

.clock {
  display: flex;
  flex-direction: column;
  align-items: center;
  width: 60px;
  font-size: 10.5px;
  line-height: 16px;
  letter-spacing: -0.3px;
}

.note {
  margin-left: 9px;
}

.desk {
  width: 1px;
  height: 36px;
  margin-left: 17px;
  background: #5a6375;
}

/* dialog */
.dialog {
  position: absolute;
  left: 508.5px;
  top: 134px;
  z-index: 5;
  width: 342px;
  height: 444px;
  border: 1px solid #777;
  background: #f0f0f0;
  box-shadow: 2px 3px 12px rgba(0, 0, 0, 0.4);
  color: #111;
  font-size: 10.5px;
  letter-spacing: -0.32px;
}

.dtitle {
  display: flex;
  align-items: center;
  height: 23px;
  padding: 0 15px 2px 2px;
  background: #fff;
}

.dtitle span {
  flex: 1;
  font-size: 11px;
  letter-spacing: -0.4px;
}

.dtitle b {
  width: 38px;
  font-weight: 600;
  font-size: 12px;
}

.dlabel {
  height: 16px;
  margin-left: 6px;
  line-height: 16px;
}

.dlabel.first {
  margin-top: 7px;
}

.dlabel.second {
  margin-top: 12px;
}

.rules {
  width: 330px;
  height: 103px;
  margin-left: 5px;
  padding: 2px;
  border: 2px solid #666;
  background: #fff;
}

.rule {
  height: 16.2px;
  padding-left: 15px;
  border-bottom: 1px solid #ececec;
  line-height: 15px;
}

.rule::before {
  content: "►";
  display: inline-block;
  width: 10px;
  margin-left: -10px;
  font-family: "DejaVu Sans", sans-serif;
  font-size: 9px;
  line-height: 10px;
}

.rule.picked {
  background: #dedee0;
}

.rule:last-child {
  border-bottom: 0;
}

.panel {
  width: 330px;
  height: 237px;
  margin-left: 5px;
  padding: 5px 9px 0 8px;
  border: 1px solid #999;
  background: #fff;
}

.bold {
  height: 16px;
  font-weight: bold;
  line-height: 16px;
  letter-spacing: -0.55px;
}

.frow {
  display: flex;
}

.style label {
  width: 68px;
  line-height: 14px;
}

.style span {
  line-height: 15px;
}

.select {
  display: flex;
  align-items: center;
  justify-content: space-between;
  height: 19px;
  padding: 0 1px 1px 3px;
  border: 1px solid #aaa;
  background: #fff;
}

.select i {
  display: flex;
  align-items: center;
  justify-content: center;
  width: 15px;
  height: 16px;
  border: 1px solid #bbb;
  background: #e5e5e5;
}

.select i::before {
  content: "";
  width: 5px;
  height: 5px;
  margin-top: -3px;
  border-right: 1px solid #444;
  border-bottom: 1px solid #444;
  transform: rotate(45deg);
}

.s116 { width: 116px; }
.s85 { width: 85px; }
.s55 { width: 55px; }
.s87 { width: 87px; }

.check {
  width: 12px;
  height: 12px;
  margin: 1px 6px 0 8px;
  border: 1px solid #333;
}

.minmax {
  display: grid;
  grid-template-columns: 53px 125px 125px;
  grid-template-rows: 12px 19px 19px;
  column-gap: 0;
  row-gap: 3px;
  margin-top: 5px;
}

.minmax > :nth-child(3n) {
  margin-left: 8px;
  margin-right: -8px;
}

.minmax > :nth-child(3n + 1) {
  line-height: 21px;
}

.minmax > span {
  line-height: 14px;
}

.ref {
  color: #777;
  padding-right: 0;
}

.appear {
  margin-top: 15px;
}

.bars4 {
  display: grid;
  grid-template-columns: 92px 72px 92px 55px;
  grid-template-rows: 16px 19px;
  row-gap: 0;
  margin-top: 2px;
}

.bars4 > .select {
  margin-left: -1px;
  margin-right: 1px;
}

.bars4 > .hot {
  margin-left: 0;
}

.swatch {
  width: 36px;
  height: 14px;
  margin-left: -2px;
}

.red { background: #f00; }
.green { background: #63c08a; }

.hot, .hot i {
  border-color: #8fa9c4;
}

.btn {
  display: flex;
  align-items: center;
  justify-content: center;
  width: 66px;
  height: 19px;
  border: 1px solid #adadad;
  background: #e1e1e1;
}

.direction {
  margin-top: 12px;
}

.neg {
  width: 135px;
  margin-top: 1px;
}

.direction label {
  width: 71px;
  margin-left: 18px;
  line-height: 21px;
}

.preview {
  justify-content: flex-end;
  margin-top: 9px;
  line-height: 18px;
}

.preview b {
  letter-spacing: -0.4px;
}

.pbox {
  width: 66px;
  height: 19px;
  margin-left: 9px;
  padding: 2px;
  border: 1px solid #444;
}

.pbox > div {
  height: 13px;
  padding: 1px;
  border: 1px solid #ddd;
}

.pfill {
  width: 44px;
  height: 9px;
  border: 1px solid #a8c49a;
  background: linear-gradient(to right, #f01818, #f8d8d4);
}

.actions {
  display: flex;
  gap: 10px;
  margin: 3px 0 0 188px;
}

/* mouse pointer over the sheet */
.pointer {
  position: absolute;
  left: 641px;
  top: 614px;
  z-index: 6;
}
```
